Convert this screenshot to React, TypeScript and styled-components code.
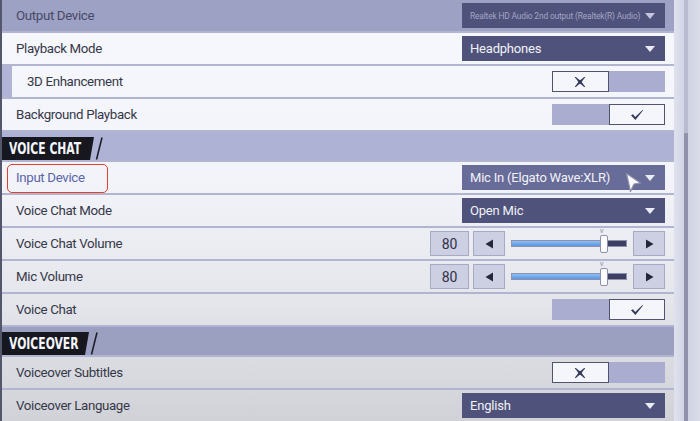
import React from 'react';
import styled, { createGlobalStyle, css } from 'styled-components';

const Colors = {
	NAVY: '#4f527a',
	NAVY_LIGHT: '#686c98',
	LAVENDER: '#aaadd0',
	GAP: '#b2b5d0',
	TEXT: '#363848',
	INK: '#2f3147',
	WHITE: '#f4f6fb',
};

const GlobalStyle = createGlobalStyle`
	html, body {
		margin: 0;
		padding: 0;
		background: #d9dbe6;
	}
	body {
		font-family: "Roboto", "Liberation Sans", sans-serif;
		-webkit-font-smoothing: antialiased;
	}
`;

const Caret = ({ dim }: { dim?: boolean }) => <CaretShape $dim={dim} />;

const CrossIcon = () => (
	<svg width="12" height="12" viewBox="0 0 12 12">
		<path d="M1.5 1.5 Q4.5 4.2 6 5 Q7.5 4.2 10.5 1.5 Q7.8 4.5 7 6 Q7.8 7.5 10.5 10.5 Q7.5 7.8 6 7 Q4.5 7.8 1.5 10.5 Q4.2 7.5 5 6 Q4.2 4.5 1.5 1.5 Z" fill="#353859" stroke="#353859" strokeWidth="1.1" strokeLinejoin="round" />
	</svg>
);

const CheckIcon = () => (
	<svg width="14" height="12" viewBox="0 0 14 12">
		<path d="M1 6.2 L3 5.2 L5.2 8 L12.5 1 L13 1.6 L5.4 11 Z" fill="#353859" />
	</svg>
);

const Arrow = ({ dir }: { dir: 'left' | 'right' }) => (
	<svg width="9" height="10" viewBox="0 0 9 10">
		{dir === 'left' ? <path d="M8 0.5 V9.5 L0.5 5 Z" fill="#24263a" /> : <path d="M1 0.5 V9.5 L8.5 5 Z" fill="#24263a" />}
	</svg>
);

const Cursor = () => (
	<CursorMark width="18" height="22" viewBox="0 0 18 22">
		<path d="M1.5 1.5 L15.5 11 L9 12 L5.5 19.5 Z" fill="#fbfbff" stroke="#8d90a8" strokeWidth="1.2" strokeLinejoin="round" />
	</CursorMark>
);

const Toggle = ({ on }: { on: boolean }) => (
	<ToggleFrame>
		<ToggleHalf $lit={!on}>{!on && <CrossIcon />}</ToggleHalf>
		<ToggleHalf $lit={on}>{on && <CheckIcon />}</ToggleHalf>
	</ToggleFrame>
);

const Volume = ({ value }: { value: number }) => (
	<VolumeGroup>
		<ValueBox>{value}</ValueBox>
		<StepButton>
			<Arrow dir="left" />
		</StepButton>
		<Slider>
			<Track>
				<Fill style={{ width: `${value}%` }} />
			</Track>
			<Knob style={{ left: `calc(${value}% - 4px)` }}>
				<KnobMark>v</KnobMark>
			</Knob>
		</Slider>
		<StepButton>
			<Arrow dir="right" />
		</StepButton>
	</VolumeGroup>
);

const SectionHeader = ({ title, tone, width }: { title: string; tone: string; width: number }) => (
	<Header $tone={tone}>
		<Tab $width={width}>
			<TabText>{title}</TabText>
		</Tab>
		<Slash width="8" height="23" viewBox="0 0 8 23">
			<path d="M7 0.5 L1.5 22.5" stroke="#1c1d2a" strokeWidth="1.6" />
		</Slash>
	</Header>
);

export default function App() {
	return (
		<>
			<GlobalStyle />
			<Screen>
				<Panel>
					<Row $active>
						<Label $muted>Output Device</Label>
						<Select $small>
							<span>Realtek HD Audio 2nd output (Realtek(R) Audio)</span>
							<Caret dim />
						</Select>
					</Row>
					<Row>
						<Label>Playback Mode</Label>
						<Select>
							<span>Headphones</span>
							<Caret />
						</Select>
					</Row>
					<Row $indent>
						<Label>3D Enhancement</Label>
						<Toggle on={false} />
					</Row>
					<Row>
						<Label>Background Playback</Label>
						<Toggle on />
					</Row>

					<SectionHeader title="VOICE CHAT" tone="#aeb2d4" width={92} />

					<Row>
						<LabelWrap>
							<Label $focused>Input Device</Label>
							<Highlight />
						</LabelWrap>
						<Select $hover>
							<span>Mic In (Elgato Wave:XLR)</span>
							<Caret />
							<Cursor />
						</Select>
					</Row>
					<Row>
						<Label>Voice Chat Mode</Label>
						<Select>
							<span>Open Mic</span>
							<Caret />
						</Select>
					</Row>
					<Row>
						<Label>Voice Chat Volume</Label>
						<Volume value={80} />
					</Row>
					<Row>
						<Label>Mic Volume</Label>
						<Volume value={80} />
					</Row>
					<Row>
						<Label>Voice Chat</Label>
						<Toggle on />
					</Row>

					<SectionHeader title="VOICEOVER" tone="#9b9fc0" width={87} />

					<Row>
						<Label>Voiceover Subtitles</Label>
						<Toggle on={false} />
					</Row>
					<Row>
						<Label>Voiceover Language</Label>
						<Select>
							<span>English</span>
							<Caret />
						</Select>
					</Row>
				</Panel>
				<Sidebar>
					<ScrollTrack>
						<ScrollThumb />
					</ScrollTrack>
				</Sidebar>
			</Screen>
		</>
	);
}

const Screen = styled.div`
	width: 700px;
	height: 421px;
	display: flex;
	overflow: hidden;
`;

const Panel = styled.div`
	width: 674px;
	height: 421px;
	box-sizing: border-box;
	flex-shrink: 0;
	display: flex;
	flex-direction: column;
	gap: 2px;
	background: ${Colors.GAP};
	border-left: 2px solid #54566c;
`;

const Row = styled.div<{ $active?: boolean; $indent?: boolean }>`
	height: 31px;
	flex-shrink: 0;
	display: flex;
	align-items: center;
	justify-content: space-between;
	padding: 0 9px 0 14px;
	background: linear-gradient(180deg, #f7f8fd 0px, #f2f4f9 180px, #e5e6ec 300px, #d1d2d8 421px) fixed;
	${({ $indent }) =>
		$indent &&
		css`
			border-left: 10px solid #b1b4d4;
			padding-left: 15px;
		`}
	${({ $active }) =>
		$active &&
		css`
			background: #9da1c3;
		`}
`;

const Label = styled.span<{ $muted?: boolean; $focused?: boolean }>`
	font-size: 13.3px;
	letter-spacing: -0.35px;
	color: ${({ $muted, $focused }) => ($focused ? '#5a64a8' : $muted ? '#474a68' : Colors.TEXT)};
	white-space: nowrap;
`;

const LabelWrap = styled.div`
	position: relative;
	align-self: stretch;
	display: flex;
	align-items: center;
`;

const Highlight = styled.div`
	position: absolute;
	left: -9px;
	top: 2px;
	width: 101px;
	height: 29px;
	box-sizing: border-box;
	border: 1.5px solid #e2402f;
	border-radius: 5px;
`;

const Select = styled.div<{ $small?: boolean; $hover?: boolean }>`
	position: relative;
	width: 203px;
	height: 25px;
	box-sizing: border-box;
	display: flex;
	align-items: center;
	justify-content: space-between;
	padding: 0 10px 0 8px;
	background: ${({ $hover }) => ($hover ? Colors.NAVY_LIGHT : Colors.NAVY)};
	color: ${({ $small }) => ($small ? '#a3a6c7' : '#f1f2f8')};
	font-size: ${({ $small }) => ($small ? '8.4px' : '13px')};
	letter-spacing: ${({ $small }) => ($small ? '-0.15px' : '-0.2px')};
	white-space: nowrap;
`;

const CaretShape = styled.span<{ $dim?: boolean }>`
	width: 0;
	height: 0;
	border-left: 5.5px solid transparent;
	border-right: 5.5px solid transparent;
	border-top: 6px solid ${({ $dim }) => ($dim ? '#c3c5dd' : '#e9ebf6')};
	margin-top: 1px;
`;

const CursorMark = styled.svg`
	position: absolute;
	left: 163px;
	top: 7px;
`;

const ToggleFrame = styled.div`
	width: 113px;
	height: 21px;
	display: grid;
	grid-template-columns: 1fr 1fr;
	background: ${Colors.LAVENDER};
`;

const ToggleHalf = styled.div<{ $lit: boolean }>`
	display: flex;
	align-items: center;
	justify-content: center;
	box-sizing: border-box;
	${({ $lit }) =>
		$lit &&
		css`
			background: ${Colors.WHITE};
			border: 1px solid #51546f;
		`}
`;

const VolumeGroup = styled.div`
	display: flex;
	align-items: center;
`;

const boxStyles = css`
	height: 25px;
	box-sizing: border-box;
	display: flex;
	align-items: center;
	justify-content: center;
	background: #cdd0e2;
	border: 1px solid #a7aac4;
`;

const ValueBox = styled.div`
	${boxStyles};
	width: 39px;
	margin-right: 4px;
	font-size: 14px;
	color: ${Colors.INK};
`;

const StepButton = styled.div`
	${boxStyles};
	width: 32px;
`;

const Slider = styled.div`
	position: relative;
	width: 116px;
	height: 25px;
	margin: 0 6px;
	display: flex;
	align-items: center;
`;

const Track = styled.div`
	width: 100%;
	height: 7px;
	box-sizing: border-box;
	background: #3d4062;
	border: 1px solid #8e91ae;
	display: flex;
`;

const Fill = styled.div`
	height: 100%;
	background: linear-gradient(180deg, #8cc0f4, #5796e0);
`;

const Knob = styled.div`
	position: absolute;
	top: 4px;
	width: 6px;
	height: 16px;
	background: #fbfbfe;
	border: 1px solid #8d90a8;
	border-radius: 2px;
`;

const KnobMark = styled.span`
	position: absolute;
	top: -9px;
	left: -1px;
	font-size: 8px;
	line-height: 8px;
	color: #8d90a8;
`;

const Header = styled.div<{ $tone: string }>`
	height: 28px;
	flex-shrink: 0;
	display: flex;
	align-items: flex-end;
	background: ${({ $tone }) => $tone};
`;

const Tab = styled.div<{ $width: number }>`
	width: ${({ $width }) => $width}px;
	height: 23px;
	box-sizing: border-box;
	display: flex;
	align-items: center;
	padding-left: 7px;
	overflow: hidden;
	background: #16171f;
	clip-path: polygon(0 0, 100% 0, calc(100% - 4px) 100%, 0 100%);
`;

const TabText = styled.span`
	display: inline-block;
	color: #f4f5fa;
	font-family: "DejaVu Sans Condensed", "DejaVu Sans", sans-serif;
	font-stretch: condensed;
	font-weight: 700;
	font-size: 15px;
	white-space: nowrap;
	transform: scaleX(0.8);
	transform-origin: left center;
`;

const Slash = styled.svg`
	margin-left: 1px;
`;

const Sidebar = styled.div`
	width: 26px;
	height: 421px;
	flex-shrink: 0;
	display: flex;
	padding-left: 10px;
	box-sizing: border-box;
	background: linear-gradient(90deg, #dfe2ee 0%, #cfd2e2 45%, #dadcea 100%);
`;

const ScrollTrack = styled.div`
	width: 4px;
	display: flex;
	flex-direction: column;
	padding-top: 133px;
	background: #b9bcd0;
`;

const ScrollThumb = styled.div`
	flex: 1;
	background: #8f92aa;
`;
